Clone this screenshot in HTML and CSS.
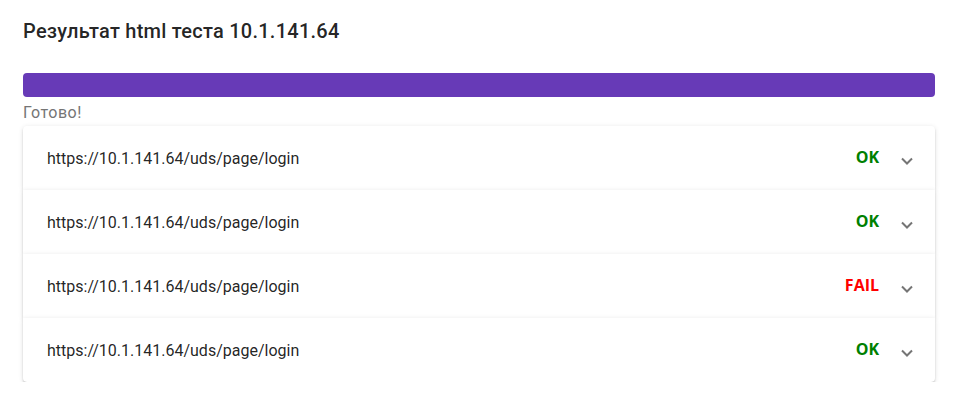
FILE: index.html
```html
<!DOCTYPE html>
<html lang="ru">
<head>
<meta charset="utf-8">
<link rel="stylesheet" href="styles.css">
</head>
<body>
<div class="page">
  <h2 class="title">Результат html теста 10.1.141.64</h2>
  <div class="bar"></div>
  <div class="done">Готово!</div>
  <div class="accordion">
    <div class="panel">
      <span class="url">https://10.1.141.64/uds/page/login</span>
      <span class="status ok">OK</span>
      <svg class="chev" width="12" height="8" viewBox="0 0 12 8"><polyline points="1,1.5 6,6.5 11,1.5" fill="none" stroke="#757575" stroke-width="2"/></svg>
    </div>
    <div class="panel">
      <span class="url">https://10.1.141.64/uds/page/login</span>
      <span class="status ok">OK</span>
      <svg class="chev" width="12" height="8" viewBox="0 0 12 8"><polyline points="1,1.5 6,6.5 11,1.5" fill="none" stroke="#757575" stroke-width="2"/></svg>
    </div>
    <div class="panel">
      <span class="url">https://10.1.141.64/uds/page/login</span>
      <span class="status fail">FAIL</span>
      <svg class="chev" width="12" height="8" viewBox="0 0 12 8"><polyline points="1,1.5 6,6.5 11,1.5" fill="none" stroke="#757575" stroke-width="2"/></svg>
    </div>
    <div class="panel">
      <span class="url">https://10.1.141.64/uds/page/login</span>
      <span class="status ok">OK</span>
      <svg class="chev" width="12" height="8" viewBox="0 0 12 8"><polyline points="1,1.5 6,6.5 11,1.5" fill="none" stroke="#757575" stroke-width="2"/></svg>
    </div>
  </div>
</div>
</body>
</html>
```
FILE: styles.css
```css
html, body {
  margin: 0;
  padding: 0;
  background: #fff;
}
.page {
  padding: 15px 23px 0 23px;
  font-family: Roboto, "Helvetica Neue", sans-serif;
  color: rgba(0,0,0,.87);
}
.title {
  margin: 0;
  font-size: 20px;
  line-height: 32px;
  font-weight: 500;
  letter-spacing: 0.0125em;
}
.bar {
  margin-top: 26px;
  height: 24px;
  border-radius: 4px;
  background: #673ab7;
}
.done {
  margin-top: 6px;
  font-size: 16px;
  line-height: 20px;
  letter-spacing: 0.5px;
  color: #757575;
  height: 23px;
}
.accordion {
  display: flex;
  flex-direction: column;
}
.panel {
  height: 64px;
  display: flex;
  align-items: center;
  padding: 0 22px 0 24px;
  background: #fff;
  box-shadow: 0 3px 1px -2px rgba(0,0,0,.2), 0 2px 2px 0 rgba(0,0,0,.14), 0 1px 5px 0 rgba(0,0,0,.12);
}
.panel:first-child {
  border-radius: 4px 4px 0 0;
}
.panel:last-child {
  border-radius: 0 0 4px 4px;
}
.url {
  flex: 1;
  font-size: 16px;
}
.status {
  font-family: "Open Sans", "Noto Sans", sans-serif;
  font-weight: 700;
  font-size: 16px;
  line-height: 20px;
  margin-top: -3px;
}
.ok { color: #008000; }
.fail { color: #ff0000; }
.chev {
  margin-left: 22px;
  margin-top: 6px;
  display: block;
}
```
